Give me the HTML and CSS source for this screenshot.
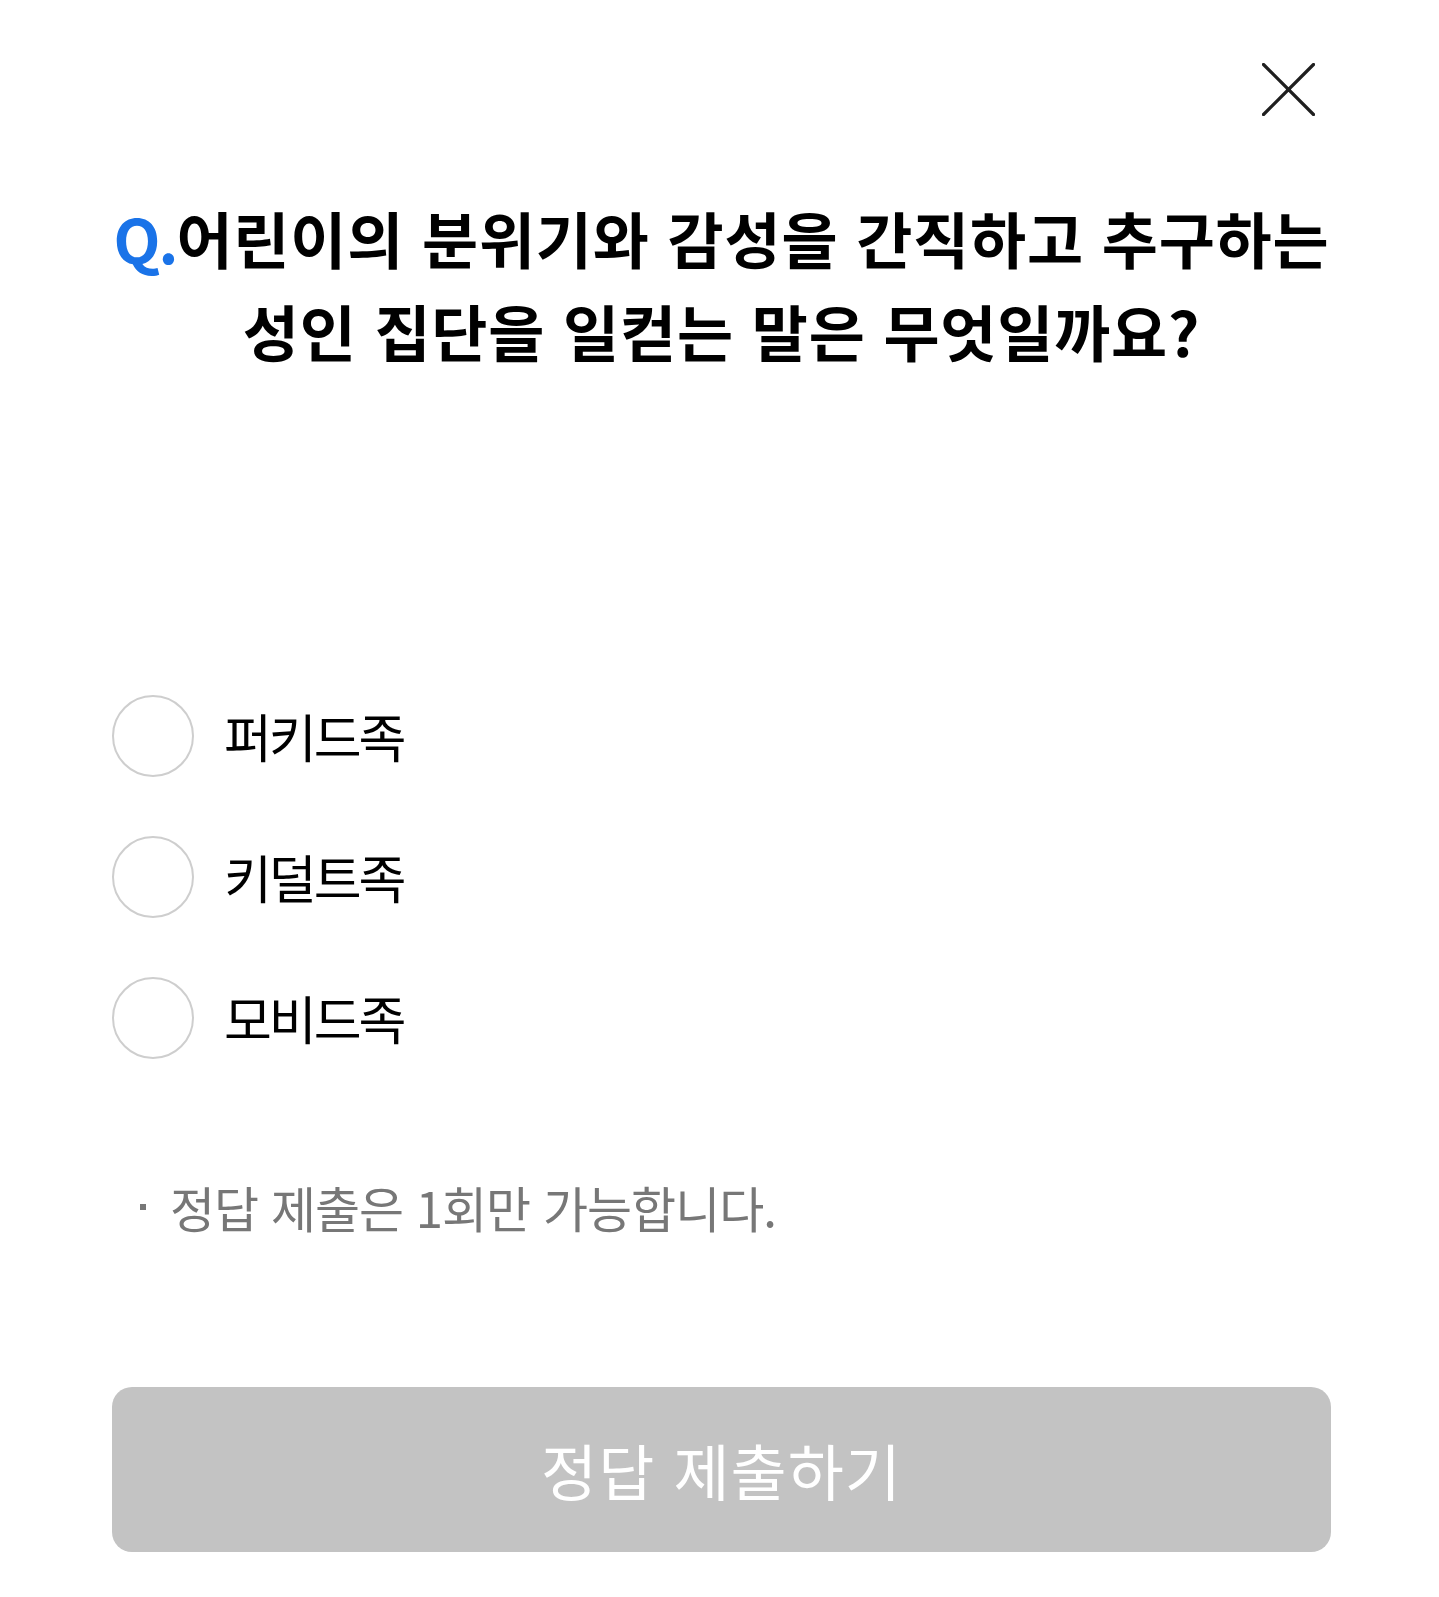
FILE: index.html
```html
<!DOCTYPE html>
<html lang="ko">
<head>
    <meta charset="UTF-8">
    <title>퀴즈</title>
    <link rel="stylesheet" href="styles.css">
</head>
<body>
    <div class="quiz">
        <div class="quiz-top">
            <button class="close-btn" aria-label="닫기">
                <svg width="53" height="53" viewBox="0 0 53 53">
                    <path d="M1.5 1.5 L51.5 51.5 M51.5 1.5 L1.5 51.5" stroke="#1f1f1f" stroke-width="3.2" stroke-linecap="round" fill="none"/>
                </svg>
            </button>
        </div>

        <h2 class="question"><span class="q-mark">Q.</span>어린이의 분위기와 감성을 간직하고 추구하는<br>성인 집단을 일컫는 말은 무엇일까요?</h2>

        <ul class="options">
            <li class="option"><span class="radio"></span><span class="option-text">퍼키드족</span></li>
            <li class="option"><span class="radio"></span><span class="option-text">키덜트족</span></li>
            <li class="option"><span class="radio"></span><span class="option-text">모비드족</span></li>
        </ul>

        <p class="notice"><span class="dot"></span>정답 제출은 1회만 가능합니다.</p>

        <button class="submit-btn" disabled>정답 제출하기</button>
    </div>
</body>
</html>
```

FILE: styles.css
```css
body {
    margin: 0;
    background-color: #fff;
    font-family: "Noto Sans CJK KR", "Noto Sans", sans-serif;
    color: #000;
}
.quiz {
    padding: 63px 108px 45px 112px;
}
.quiz-top {
    display: flex;
    justify-content: flex-end;
}
.close-btn {
    width: 53px;
    height: 53px;
    padding: 0;
    margin-right: 16px;
    border: none;
    background: none;
    cursor: pointer;
}
.close-btn svg {
    display: block;
}
.question {
    margin: 75px 0 0;
    font-size: 61px;
    font-weight: 700;
    line-height: 93px;
    letter-spacing: 0.8px;
    text-align: center;
}
.q-mark {
    color: #1a73e8;
    letter-spacing: -2px;
}
.options {
    list-style: none;
    margin: 317px 0 0;
    padding: 0;
    display: flex;
    flex-direction: column;
    gap: 58px;
}
.option {
    display: flex;
    align-items: center;
    gap: 30px;
}
.radio {
    width: 78px;
    height: 78px;
    border: 2.5px solid #cecece;
    border-radius: 50%;
    flex-shrink: 0;
}
.option-text {
    font-size: 52px;
    line-height: 83px;
    letter-spacing: -3px;
}
.notice {
    display: flex;
    align-items: center;
    margin: 118px 0 0 28px;
    font-size: 49px;
    line-height: 60px;
    letter-spacing: -1px;
    color: #777;
}
.dot {
    width: 6px;
    height: 6px;
    background-color: #777;
    margin-right: 24px;
}
.submit-btn {
    display: block;
    width: 100%;
    height: 165px;
    margin-top: 150px;
    border: none;
    border-radius: 20px;
    background-color: #c3c3c3;
    color: #fff;
    font-family: inherit;
    font-size: 61px;
    letter-spacing: 1px;
}
```
